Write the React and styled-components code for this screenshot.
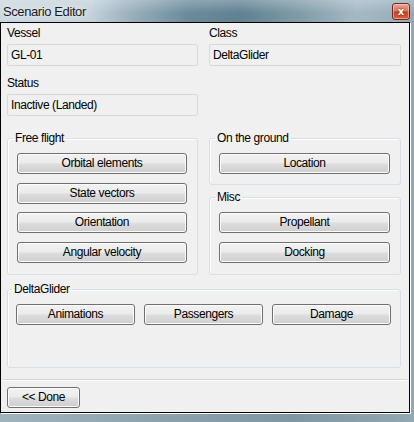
import React from "react";
import styled, { createGlobalStyle } from "styled-components";

const GlobalStyle = createGlobalStyle`
  html, body {
    margin: 0;
    padding: 0;
    background: #8ea4ae;
  }
  body {
    font-family: "Liberation Sans", Arial, sans-serif;
    font-size: 12px;
    letter-spacing: -0.4px;
    color: #000;
  }
`;

const Window = styled.div`
  width: 414px;
  height: 422px;
  box-sizing: border-box;
  padding: 0 4px 9px 0;
  display: flex;
  flex-direction: column;
  background: linear-gradient(90deg, #9fb3bd 0%, #8ba2ad 40%, #7e97a2 70%, #92a8b2 100%);
  overflow: hidden;
`;

const TitleBar = styled.div`
  height: 22px;
  flex: none;
  display: flex;
  align-items: center;
  justify-content: space-between;
  padding: 0 4px 0 3px;
  margin-right: -4px;
  background:
    linear-gradient(180deg, rgba(255, 255, 255, 0.25) 0%, rgba(255, 255, 255, 0) 60%),
    linear-gradient(90deg, #c9d6de 0%, #c3d1da 22%, #98afbb 32%, #6b8b9c 45%, #5f8192 58%, #7f9ba8 72%, #a4b9c4 86%, #94abb6 100%);
`;

const Title = styled.span`
  font-size: 13px;
  color: #1b1b1b;
  text-shadow: 0 0 6px #fff, 0 0 10px rgba(255, 255, 255, 0.8);
`;

const CloseButton = styled.div`
  width: 18px;
  height: 17px;
  margin-top: 1px;
  box-sizing: border-box;
  border: 1px solid #6e2b1e;
  border-radius: 3px;
  background: linear-gradient(180deg, #e9a799 0%, #d9765f 45%, #c4421f 55%, #d7613f 100%);
  box-shadow: inset 0 0 0 1px rgba(255, 220, 210, 0.5);
  display: flex;
  align-items: center;
  justify-content: center;
  color: #fff;
  font-family: "DejaVu Sans", sans-serif;
  font-weight: bold;
  font-size: 10px;
  letter-spacing: 0;
  line-height: 1;
  text-shadow: 0 0 2px #5a1a10;
`;

const Client = styled.div`
  width: 410px;
  height: 391px;
  box-sizing: border-box;
  border: 1px solid #000;
  box-shadow: 1px 1px 0 #fff;
  background: #f0f0f0;
  padding: 3px 8px 0 6px;
  display: flex;
  flex-direction: column;
`;

const FieldGrid = styled.div`
  display: grid;
  grid-template-columns: 191px 192px;
  column-gap: 11px;
  row-gap: 10px;
`;

const Field = styled.div`
  display: flex;
  flex-direction: column;
  gap: 3px;
`;

const Label = styled.div`
  line-height: 15px;
  height: 15px;
`;

const ValueBox = styled.div`
  height: 22px;
  box-sizing: border-box;
  border: 1px solid #d9d9d9;
  border-radius: 2px;
  padding: 0 3px;
  line-height: 20px;
  background: #f0f0f0;
`;

const MiddleRow = styled.div`
  margin-top: 15px;
  display: grid;
  grid-template-columns: 191px 192px;
  column-gap: 11px;
  align-items: stretch;
`;

const Column = styled.div`
  display: flex;
  flex-direction: column;
  gap: 5px;
`;

const Group = styled.fieldset`
  margin: ${(p) => p.$marginTop ?? 0}px 0 0 0;
  min-width: 0;
  box-sizing: border-box;
  border: 1px solid #d5dfe5;
  border-radius: 3px;
  box-shadow: inset 1px 1px 0 #fff;
  padding: 7px ${(p) => p.$padRight ?? 10}px ${(p) => p.$padBottom ?? 11}px ${(p) => p.$padLeft ?? 9}px;
  height: ${(p) => (p.$height ? `${p.$height}px` : "auto")};
`;

const Legend = styled.legend`
  padding: 0 2px;
  margin-left: -4px;
  line-height: 15px;
`;

const ButtonStack = styled.div`
  display: flex;
  flex-direction: column;
  gap: 8.5px;
`;

const ButtonRow = styled.div`
  display: grid;
  grid-template-columns: repeat(3, 119px);
  column-gap: 9px;
`;

const Button = styled.button`
  height: 21px;
  width: ${(p) => (p.$width ? `${p.$width}px` : "100%")};
  box-sizing: border-box;
  padding: 0;
  border: 1px solid #707070;
  border-radius: 3px;
  background: linear-gradient(180deg, #f2f2f2 0%, #ebebeb 48%, #dddddd 52%, #cfcfcf 100%);
  box-shadow: inset 0 0 0 1px #fcfcfc;
  font: inherit;
  letter-spacing: inherit;
  color: #000;
  line-height: 19px;
  text-align: center;
  cursor: default;
`;

const Separator = styled.div`
  margin: 11px -6px 0 -4px;
  height: 1px;
  background: #d5d5d5;
  box-shadow: 0 1px 0 #fff;
`;

const Footer = styled.div`
  margin-top: 7px;
  display: flex;
`;

export default function App() {
  return (
    <>
      <GlobalStyle />
      <Window>
        <TitleBar>
          <Title>Scenario Editor</Title>
          <CloseButton>x</CloseButton>
        </TitleBar>
        <Client>
          <FieldGrid>
            <Field>
              <Label>Vessel</Label>
              <ValueBox>GL-01</ValueBox>
            </Field>
            <Field>
              <Label>Class</Label>
              <ValueBox>DeltaGlider</ValueBox>
            </Field>
            <Field>
              <Label>Status</Label>
              <ValueBox>Inactive (Landed)</ValueBox>
            </Field>
          </FieldGrid>

          <MiddleRow>
            <Group>
              <Legend>Free flight</Legend>
              <ButtonStack>
                <Button>Orbital elements</Button>
                <Button>State vectors</Button>
                <Button>Orientation</Button>
                <Button>Angular velocity</Button>
              </ButtonStack>
            </Group>
            <Column>
              <Group $padBottom={10}>
                <Legend>On the ground</Legend>
                <Button>Location</Button>
              </Group>
              <Group>
                <Legend>Misc</Legend>
                <ButtonStack>
                  <Button>Propellant</Button>
                  <Button>Docking</Button>
                </ButtonStack>
              </Group>
            </Column>
          </MiddleRow>

          <Group $marginTop={7} $height={86} $padLeft={8} $padRight={8} $padBottom={0}>
            <Legend>DeltaGlider</Legend>
            <ButtonRow>
              <Button>Animations</Button>
              <Button>Passengers</Button>
              <Button>Damage</Button>
            </ButtonRow>
          </Group>

          <Separator />
          <Footer>
            <Button $width={73}>&lt;&lt; Done</Button>
          </Footer>
        </Client>
      </Window>
    </>
  );
}
